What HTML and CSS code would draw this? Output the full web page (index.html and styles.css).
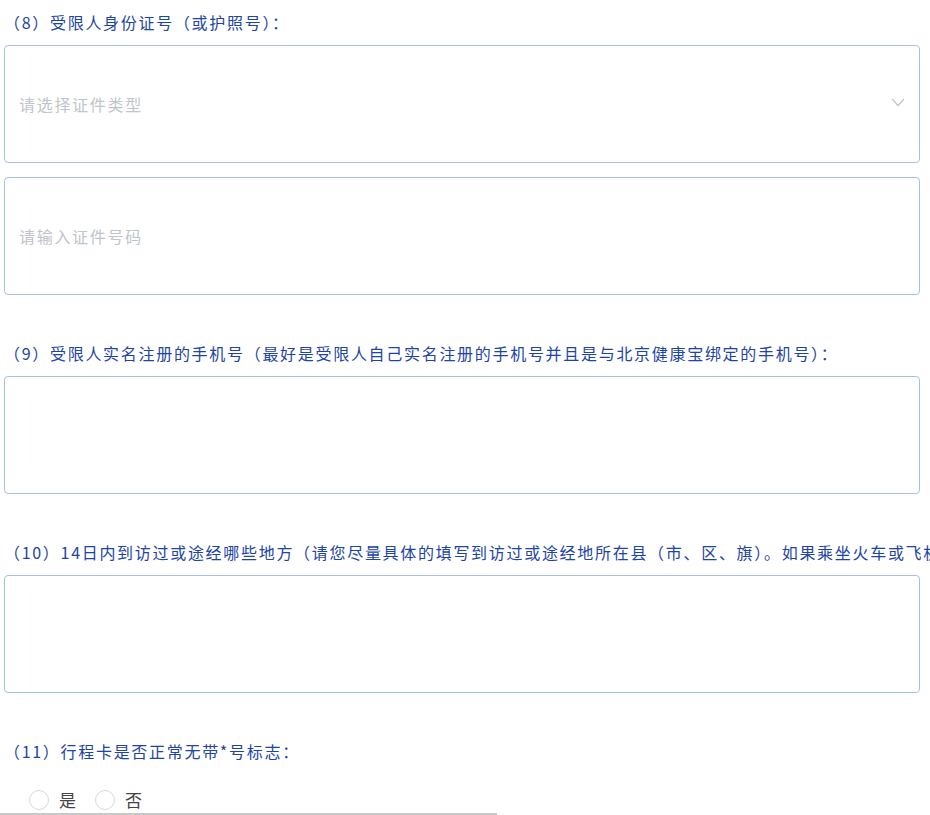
FILE: index.html
```html
<!DOCTYPE html>
<html lang="zh-CN">
<head>
  <meta charset="UTF-8">
  <meta name="viewport" content="width=device-width, initial-scale=1.0">
  <title>信息登记</title>
  <link rel="stylesheet" href="styles.css">
</head>
<body>
  <div class="form">
    <div class="item">
      <div class="label">（8）受限人身份证号（或护照号）：</div>
      <div class="box select">
        <span class="ph">请选择证件类型</span>
        <svg class="arrow" width="14" height="9" viewBox="0 0 14 9"><path d="M1 1 L7 7.5 L13 1" fill="none" stroke="#c0c4cc" stroke-width="1.2"/></svg>
      </div>
      <div class="box gap"><span class="ph">请输入证件号码</span></div>
    </div>

    <div class="item">
      <div class="label">（9）受限人实名注册的手机号（最好是受限人自己实名注册的手机号并且是与北京健康宝绑定的手机号）：</div>
      <div class="box"></div>
    </div>

    <div class="item">
      <div class="label">（10）14日内到访过或途经哪些地方（请您尽量具体的填写到访过或途经地所在县（市、区、旗）。如果乘坐火车或飞机，请填写车次或航班号）：</div>
      <div class="box"></div>
    </div>

    <div class="item">
      <div class="label">（11）行程卡是否正常无带*号标志：</div>
      <div class="radios">
        <label class="radio"><span class="dot"></span>是</label>
        <label class="radio"><span class="dot"></span>否</label>
      </div>
    </div>
  </div>
  <div class="scrollbar"></div>
</body>
</html>
```

FILE: styles.css
```css
body {
  margin: 0;
  font-family: "Noto Sans CJK SC", "Noto Sans", sans-serif;
  background: #fff;
  overflow: hidden;
}
.form {
  padding: 10px 10px 0 4px;
}
.item {
  margin-bottom: 46px;
}
.label {
  font-size: 16px;
  line-height: 24px;
  letter-spacing: 1.7px;
  color: #1d44a6;
  white-space: nowrap;
}
.box {
  display: flex;
  align-items: center;
  height: 118px;
  box-sizing: border-box;
  margin-top: 11px;
  padding: 0 14px;
  border: 1px solid #a6bfe9;
  border-radius: 4px;
}
.box.gap {
  margin-top: 14px;
}
.ph {
  font-size: 16px;
  letter-spacing: 1.7px;
  color: #c0c4cc;
}
.select {
  justify-content: space-between;
}
.arrow {
  margin-top: -4px;
}
.radios {
  display: flex;
  gap: 19px;
  padding: 25px 0 0 25px;
}
.radio {
  display: flex;
  align-items: center;
  gap: 10px;
  font-size: 17px;
  line-height: 24px;
  color: #444;
}
.dot {
  width: 18px;
  height: 18px;
  border: 1px solid #d9d9d9;
  border-radius: 50%;
}
.scrollbar {
  position: fixed;
  left: 0;
  bottom: 0;
  width: 497px;
  height: 2px;
  background: #c8c8c8;
}
```
